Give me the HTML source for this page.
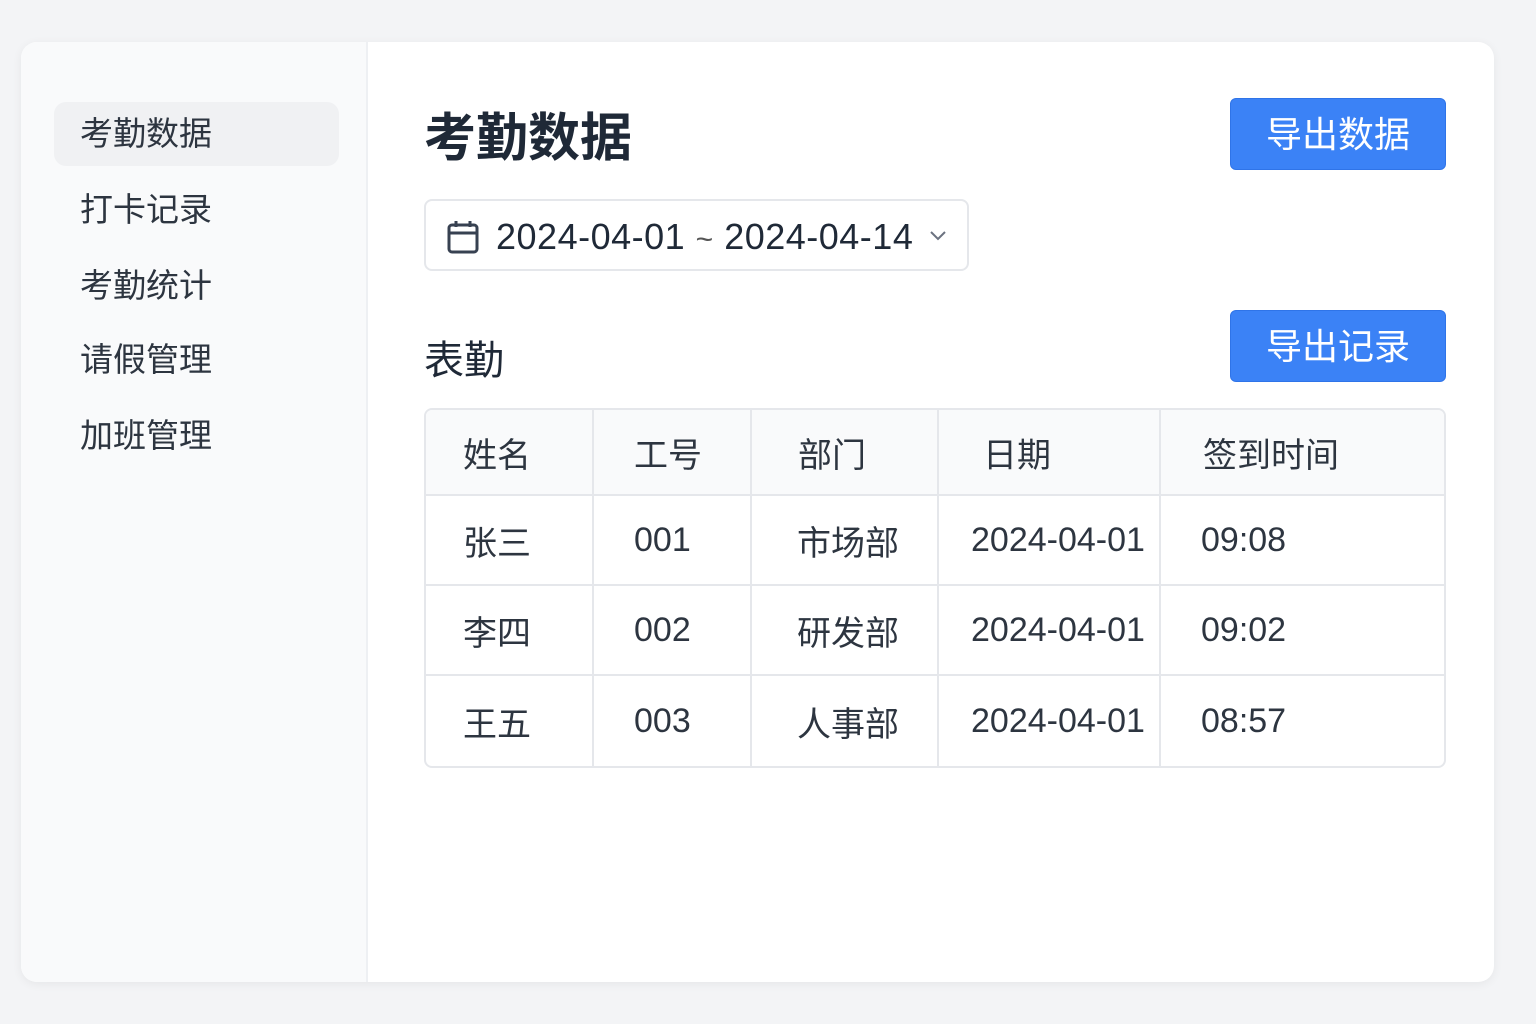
<!DOCTYPE html>
<html><head><meta charset="utf-8"><style>
*{box-sizing:border-box;margin:0;padding:0}
body{width:1536px;height:1024px;background:#f3f4f6;font-family:"Liberation Sans","Noto Sans CJK SC",sans-serif;color:#1f2937;position:relative;overflow:hidden}
.card{position:absolute;left:21px;top:42px;width:1473px;height:940px;background:#fff;border-radius:16px;box-shadow:0 2px 10px rgba(0,0,0,.06);overflow:hidden}
.side{position:absolute;left:0;top:0;width:347px;height:100%;background:#f9fafb;border-right:2px solid #eef0f3}
.nav{position:absolute;left:33px;width:285px;height:64px;line-height:64px;padding-left:26px;font-size:33px;color:#2d3540;border-radius:12px}
.nav.a{background:#f0f1f3}
.abs{position:absolute}
.btn{position:absolute;left:1209px;width:216px;height:72px;background:#3b82f6;color:#fff;font-size:36px;line-height:72px;text-align:center;border-radius:6px;border:1px solid #2f74e8}
.date{position:absolute;left:403px;top:157px;width:545px;height:72px;border:2px solid #e5e7eb;border-radius:8px}
table{position:absolute;left:403px;top:366px;width:1022px;border-collapse:separate;border-spacing:0;border:2px solid #e5e7eb;border-radius:8px;overflow:hidden;font-size:34px;color:#2d3540}
td,th{font-weight:normal;text-align:left;border-right:2px solid #e5e7eb;border-bottom:2px solid #e5e7eb;height:90px}
th{background:#f9fafb;height:86px}
tr:last-child td{border-bottom:none}
td:last-child,th:last-child{border-right:none}
</style></head><body>
<div class="card">
<div class="side">
<div class="nav a" style="top:60px">考勤数据</div>
<div class="nav" style="top:136px">打卡记录</div>
<div class="nav" style="top:212px">考勤统计</div>
<div class="nav" style="top:286px">请假管理</div>
<div class="nav" style="top:362px">加班管理</div>
</div>
<div class="abs" style="left:403px;top:54px;font-size:52px;font-weight:bold;color:#1f2937">考勤数据</div>
<div class="btn" style="top:56px">导出数据</div>
<div class="date">
<svg class="abs" style="left:20px;top:18px" width="34" height="36" viewBox="0 0 34 36"><rect x="3" y="6" width="28" height="27" rx="3" fill="none" stroke="#374151" stroke-width="3"/><line x1="3" y1="14" x2="31" y2="14" stroke="#374151" stroke-width="3"/><line x1="10" y1="2" x2="10" y2="8" stroke="#374151" stroke-width="3"/><line x1="24" y1="2" x2="24" y2="8" stroke="#374151" stroke-width="3"/></svg>
<div class="abs" style="left:70px;top:15px;font-size:36px;letter-spacing:0.5px;color:#1f2937">2024-04-01 <span style="font-size:30px;color:#555">~</span> 2024-04-14</div>
<svg class="abs" style="left:502px;top:28px" width="20" height="14" viewBox="0 0 20 14"><path d="M3 3 L10 10 L17 3" fill="none" stroke="#6b7280" stroke-width="2"/></svg>
</div>
<div class="abs" style="left:403px;top:286px;font-size:40px;color:#1f2937">表勤</div>
<div class="btn" style="top:268px">导出记录</div>
<table>
<tr><th style="width:168px;padding-left:37px">姓名</th><th style="width:158px;padding-left:40px">工号</th><th style="width:187px;padding-left:46px">部门</th><th style="width:222px;padding-left:44px">日期</th><th style="padding-left:42px">签到时间</th></tr>
<tr><td style="padding-left:37px">张三</td><td style="padding-left:40px">001</td><td style="padding-left:45px">市场部</td><td style="padding-left:32px">2024-04-01</td><td style="padding-left:40px">09:08</td></tr>
<tr><td style="padding-left:37px">李四</td><td style="padding-left:40px">002</td><td style="padding-left:45px">研发部</td><td style="padding-left:32px">2024-04-01</td><td style="padding-left:40px">09:02</td></tr>
<tr><td style="padding-left:37px">王五</td><td style="padding-left:40px">003</td><td style="padding-left:45px">人事部</td><td style="padding-left:32px">2024-04-01</td><td style="padding-left:40px">08:57</td></tr>
</table>
</div>
</body></html>
